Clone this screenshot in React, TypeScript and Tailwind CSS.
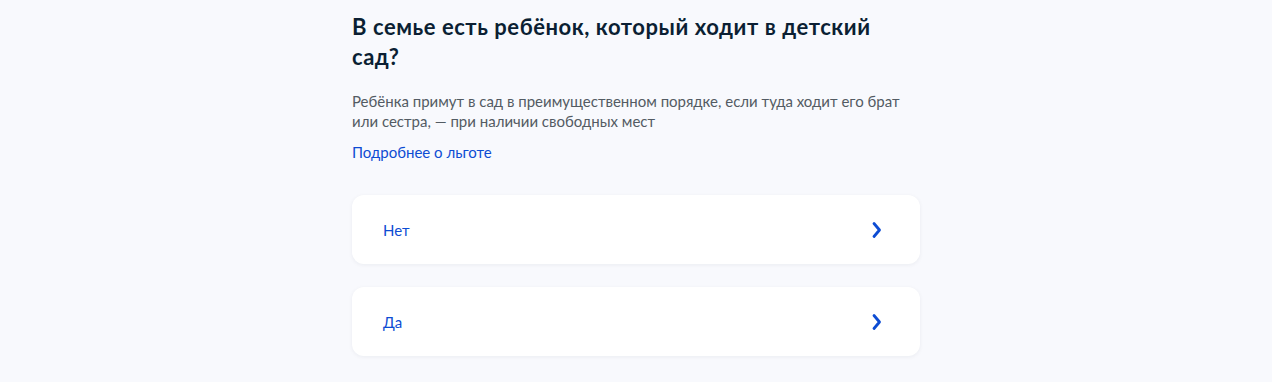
import React from "react";

const options = ["Нет", "Да"];

function Chevron() {
  return (
    <svg width="24" height="24" viewBox="0 0 24 24" fill="none">
      <path
        d="M10 5.5L15.5 12L10 18.5"
        stroke="#0d4cd3"
        strokeWidth="2.8"
        strokeLinecap="round"
        strokeLinejoin="round"
      />
    </svg>
  );
}

export default function App() {
  return (
    <div
      className="min-h-screen bg-[#f8f9fd] text-[#0b1f33]"
      style={{ fontFamily: "Lato, 'Noto Sans', sans-serif" }}
    >
      <div className="w-[568px] mx-auto pt-[12px]">
        <h1 className="text-[22px] leading-[30px] font-bold tracking-[0.55px] pr-[30px]">
          В семье есть ребёнок, который ходит в детский сад?
        </h1>
        <p className="mt-[19px] text-[15px] leading-[20px] text-[#535b63]">
          Ребёнка примут в сад в преимущественном порядке, если туда ходит его брат
          <br />
          или сестра, — при наличии свободных мест
        </p>
        <a href="#" className="block mt-[11px] text-[15px] leading-[20px] text-[#0d4cd3]">
          Подробнее о льготе
        </a>

        <div className="mt-[33px] flex flex-col gap-[23px]">
          {options.map((opt) => (
            <button
              key={opt}
              className="w-full h-[69px] flex items-center justify-between pl-[31px] pr-[32px] bg-white rounded-[12px] shadow-[0_1px_4px_rgba(11,31,51,0.06)] text-left"
            >
              <span className="text-[15px] leading-[20px] text-[#0d4cd3]">{opt}</span>
              <Chevron />
            </button>
          ))}
        </div>
      </div>
    </div>
  );
}
